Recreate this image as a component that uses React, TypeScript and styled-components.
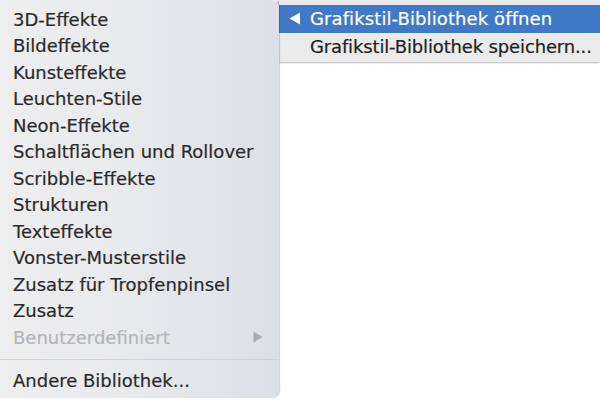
import React from 'react';
import styled, { createGlobalStyle } from 'styled-components';

const GlobalStyle = createGlobalStyle`
  html, body {
    margin: 0;
    padding: 0;
    background: #ffffff;
  }
  body {
    font-family: 'DejaVu Sans', 'Liberation Sans', sans-serif;
  }
`;

const items = [
  { label: '3D-Effekte' },
  { label: 'Bildeffekte' },
  { label: 'Kunsteffekte' },
  { label: 'Leuchten-Stile' },
  { label: 'Neon-Effekte' },
  { label: 'Schaltflächen und Rollover' },
  { label: 'Scribble-Effekte' },
  { label: 'Strukturen' },
  { label: 'Texteffekte' },
  { label: 'Vonster-Musterstile' },
  { label: 'Zusatz für Tropfenpinsel' },
  { label: 'Zusatz' },
  { label: 'Benutzerdefiniert', disabled: true, submenu: true },
];

const Screen = styled.div`
  display: flex;
  align-items: flex-start;
  width: 600px;
  height: 400px;
  overflow: hidden;
  background: #ffffff;
`;

const MainMenu = styled.div`
  width: 279px;
  height: 398px;
  flex-shrink: 0;
  box-sizing: border-box;
  padding-top: 6px;
  background: linear-gradient(90deg, #eeeeef 0%, #e9eaec 45%, #dcdfe6 100%);
  border-radius: 0 7px 7px 0;
  box-shadow: 1px 0 1px rgba(0, 0, 0, 0.18);
  display: flex;
  flex-direction: column;
  position: relative;
  z-index: 1;
`;

const Row = styled.div<{ $disabled?: boolean }>`
  height: 26.5px;
  display: flex;
  align-items: center;
  justify-content: space-between;
  padding: 0 16px 0 13px;
  font-size: 18px;
  -webkit-text-stroke: 0.2px ${(p) => (p.$disabled ? '#b4b5b8' : '#2b2a2a')};
  color: ${(p) => (p.$disabled ? '#b4b5b8' : '#2b2a2a')};
  white-space: nowrap;
`;

const Caret = styled.span`
  display: inline-flex;
`;

const Separator = styled.div`
  height: 1px;
  margin: 8px 0;
  background: #cfd1d6;
`;

const SubMenu = styled.div`
  width: 321px;
  height: 62px;
  flex-shrink: 0;
  box-sizing: border-box;
  padding-top: 5px;
  background: #ebebeb;
  box-shadow: -1px 0 2px rgba(0, 0, 0, 0.35), 0 1px 2px rgba(0, 0, 0, 0.15);
  display: flex;
  flex-direction: column;
  overflow: hidden;
`;

const SubRow = styled.div<{ $active?: boolean }>`
  height: 27.5px;
  display: flex;
  align-items: center;
  gap: 9px;
  padding-left: 10px;
  font-size: 18px;
  letter-spacing: ${(p) => (p.$active ? '0.1px' : '-0.15px')};
  white-space: nowrap;
  background: ${(p) => (p.$active ? '#4179c9' : 'transparent')};
  color: ${(p) => (p.$active ? '#ffffff' : '#222222')};
  -webkit-text-stroke: 0.2px ${(p) => (p.$active ? '#ffffff' : '#222222')};
`;

const Arrow = styled.span<{ $hidden?: boolean }>`
  width: 12px;
  flex-shrink: 0;
  display: inline-flex;
  visibility: ${(p) => (p.$hidden ? 'hidden' : 'visible')};
`;

const App = () => {
  return (
    <Screen>
      <GlobalStyle />
      <MainMenu>
        {items.map((item) => (
          <Row key={item.label} $disabled={item.disabled}>
            <span>{item.label}</span>
            {item.submenu && (
              <Caret>
                <svg width="10" height="12" viewBox="0 0 10 12">
                  <polygon points="0.5,0.5 0.5,11.5 9.5,6" fill="#a9abaf" />
                </svg>
              </Caret>
            )}
          </Row>
        ))}
        <Separator />
        <Row>Andere Bibliothek...</Row>
      </MainMenu>
      <SubMenu>
        <SubRow $active>
          <Arrow>
            <svg width="12" height="13" viewBox="0 0 12 13">
              <polygon points="11,0.5 11,12.5 0.5,6.5" fill="#ffffff" />
            </svg>
          </Arrow>
          Grafikstil-Bibliothek öffnen
        </SubRow>
        <SubRow>
          <Arrow $hidden />
          Grafikstil-Bibliothek speichern...
        </SubRow>
      </SubMenu>
    </Screen>
  );
};

export default App;
